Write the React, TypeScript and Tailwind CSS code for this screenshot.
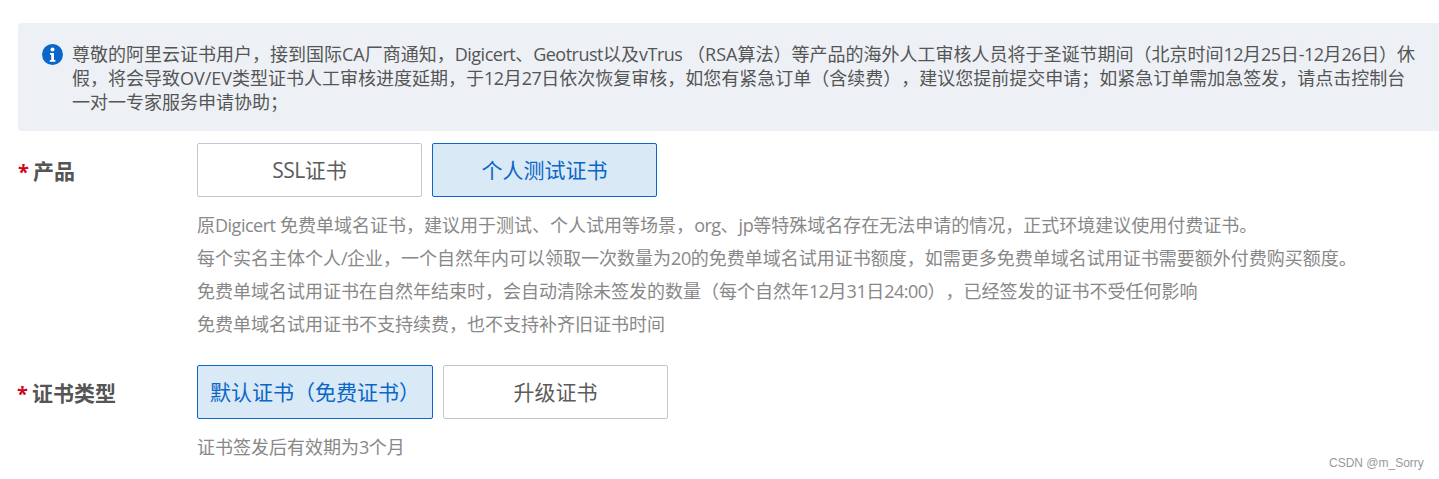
import React from 'react';

const help = [
  '原Digicert 免费单域名证书，建议用于测试、个人试用等场景，org、jp等特殊域名存在无法申请的情况，正式环境建议使用付费证书。',
  '每个实名主体个人/企业，一个自然年内可以领取一次数量为20的免费单域名试用证书额度，如需更多免费单域名试用证书需要额外付费购买额度。',
  '免费单域名试用证书在自然年结束时，会自动清除未签发的数量（每个自然年12月31日24:00），已经签发的证书不受任何影响',
  '免费单域名试用证书不支持续费，也不支持补齐旧证书时间',
];

function Mixed({ text }: { text: string }) {
  return (
    <>
      {text.split(/([A-Za-z0-9/:-]+)/).map((part, i) =>
        i % 2 && !/^(CA|RSA|OV\/EV)$/.test(part) ? (
          <span key={i} className="tracking-[-0.5px]">
            {part}
          </span>
        ) : (
          part
        )
      )}
    </>
  );
}

function OptionButton({ label, active, width }: { label: string; active?: boolean; width: string }) {
  return (
    <div
      className={`${width} h-[54px] pt-[2px] flex items-center justify-center rounded-[2px] border text-[21px] whitespace-nowrap ${
        active ? 'bg-[#d9e9f6] border-[#0a66c8] text-[#0a66c8]' : 'bg-white border-[#c4c6cf] text-[#5c5c5c]'
      }`}
    >
      <span>
        <Mixed text={label} />
      </span>
    </div>
  );
}

export default function App() {
  return (
    <div className="w-[1439px] h-[479px] overflow-hidden bg-white pt-[23px] pl-[18px] [text-spacing-trim:space-all] font-['Open_Sans','Noto_Sans_CJK_SC',sans-serif]">
      <div className="h-[108px] bg-[#edf1f6] rounded-tl-[3px] rounded-bl-[3px] flex pl-[24px] pt-[19px]">
        <svg width="21" height="21" viewBox="0 0 21 21" className="mt-[2px] shrink-0">
          <circle cx="10.5" cy="10.5" r="10.5" fill="#0a66c8" />
          <circle cx="10.5" cy="5.6" r="2" fill="#ffffff" />
          <path d="M8 9h4v7h1.4v1.8H7.8V16h1.4v-5.2H8z" fill="#ffffff" />
        </svg>
        <p className="ml-[9px] text-[18px] leading-[24px] text-[#555555] whitespace-nowrap">
          <Mixed text="尊敬的阿里云证书用户，接到国际CA厂商通知，Digicert、Geotrust以及vTrus （RSA算法）等产品的海外人工审核人员将于圣诞节期间（北京时间12月25日-12月26日）休" />
          <br />
          <Mixed text="假，将会导致OV/EV类型证书人工审核进度延期，于12月27日依次恢复审核，如您有紧急订单（含续费），建议您提前提交申请；如紧急订单需加急签发，请点击控制台" />
          <br />
          一对一专家服务申请协助；
        </p>
      </div>

      <div className="flex mt-[12px]">
        <div className="w-[179px] h-[54px] pt-[4px] flex items-center text-[21px] font-bold text-[#555555]">
          <span className="text-[#d0021b] text-[20px] w-[15px]">*</span>
          <span>产品</span>
        </div>
        <div className="flex-1">
          <div className="flex gap-[10px]">
            <OptionButton label="SSL证书" width="w-[225px]" />
            <OptionButton label="个人测试证书" active width="w-[225px]" />
          </div>
          <div className="mt-[12px] text-[18px] leading-[33px] text-[#888888] whitespace-nowrap">
            {help.map((line) => (
              <div key={line}>
                <Mixed text={line} />
              </div>
            ))}
          </div>
        </div>
      </div>

      <div className="flex mt-[24px] -ml-[1px]">
        <div className="w-[180px] h-[54px] pt-[4px] flex items-center text-[21px] font-bold text-[#555555]">
          <span className="text-[#d0021b] text-[20px] w-[15px]">*</span>
          <span>证书类型</span>
        </div>
        <div className="flex-1">
          <div className="flex gap-[10px]">
            <OptionButton label="默认证书（免费证书）" active width="w-[236px]" />
            <OptionButton label="升级证书" width="w-[225px]" />
          </div>
          <div className="mt-[12px] text-[18px] leading-[33px] text-[#888888] whitespace-nowrap">
            <Mixed text="证书签发后有效期为3个月" />
          </div>
        </div>
      </div>

      <div className="absolute left-[1329px] top-[456px] text-[12px] leading-[14px] text-[#999999] font-['Liberation_Sans',sans-serif]">
        CSDN @m_Sorry
      </div>
    </div>
  );
}
